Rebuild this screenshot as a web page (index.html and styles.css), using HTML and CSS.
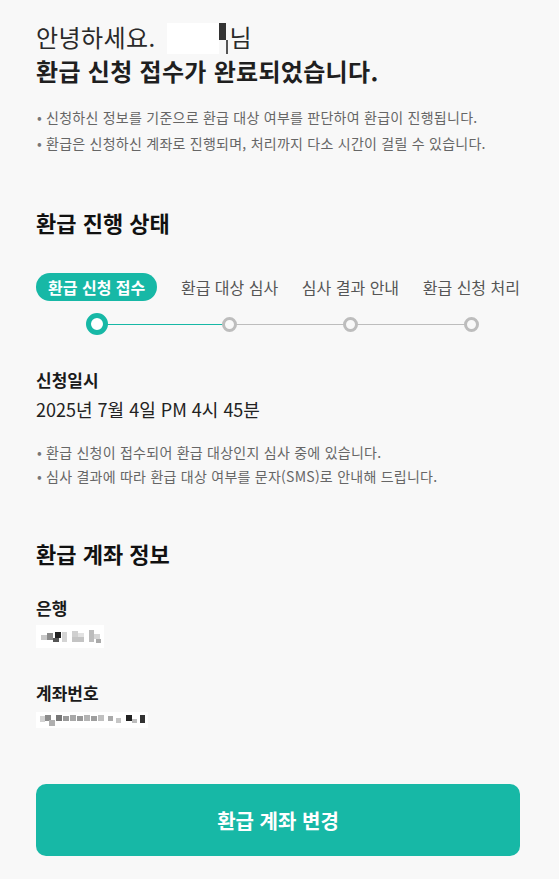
FILE: index.html
```html
<!DOCTYPE html>
<html lang="ko">
<head>
    <meta charset="UTF-8">
    <meta name="viewport" content="width=device-width, initial-scale=1.0">
    <title>환급 신청 완료</title>
    <link rel="stylesheet" href="styles.css">
</head>
<body>
    <main class="page">
        <section class="intro">
            <p class="greeting">안녕하세요.<span class="name-mask"><span class="mask-box"></span><span class="mask-bar"></span><span class="mask-stem"></span></span>님</p>
            <h1 class="title">환급 신청 접수가 완료되었습니다.</h1>
            <ul class="notes">
                <li>신청하신 정보를 기준으로 환급 대상 여부를 판단하여 환급이 진행됩니다.</li>
                <li>환급은 신청하신 계좌로 진행되며, 처리까지 다소 시간이 걸릴 수 있습니다.</li>
            </ul>
        </section>

        <section class="status">
            <h2 class="section-title">환급 진행 상태</h2>
            <div class="steps">
                <div class="track"></div>
                <div class="step active">
                    <span class="step-label">환급 신청 접수</span>
                    <span class="dot"></span>
                </div>
                <div class="step">
                    <span class="step-label">환급 대상 심사</span>
                    <span class="dot"></span>
                </div>
                <div class="step">
                    <span class="step-label">심사 결과 안내</span>
                    <span class="dot"></span>
                </div>
                <div class="step">
                    <span class="step-label">환급 신청 처리</span>
                    <span class="dot"></span>
                </div>
            </div>

            <dl class="info">
                <dt>신청일시</dt>
                <dd class="date">2025년 7월 4일 PM 4시 45분</dd>
            </dl>
            <ul class="notes compact">
                <li>환급 신청이 접수되어 환급 대상인지 심사 중에 있습니다.</li>
                <li>심사 결과에 따라 환급 대상 여부를 문자(SMS)로 안내해 드립니다.</li>
            </ul>
        </section>

        <section class="account">
            <h2 class="section-title">환급 계좌 정보</h2>
            <dl class="info">
                <dt>은행</dt>
                <dd>
                    <!-- masked bank name -->
                    <svg class="masked" width="70" height="28" viewBox="0 0 70 28">
                        <rect x="0" y="5" width="68" height="23" fill="#fff"/>
                        <rect x="5" y="15" width="6" height="5" fill="#c8c8c8"/>
                        <rect x="11" y="13" width="6" height="7" fill="#8a8a8a"/>
                        <rect x="19" y="12" width="6" height="6" fill="#222"/>
                        <rect x="17" y="18" width="6" height="4" fill="#555"/>
                        <rect x="26" y="12" width="5" height="10" fill="#d4d4d4"/>
                        <rect x="36" y="11" width="6" height="6" fill="#d0d0d0"/>
                        <rect x="36" y="17" width="12" height="5" fill="#c4c4c4"/>
                        <rect x="42" y="13" width="6" height="4" fill="#e2e2e2"/>
                        <rect x="53" y="10" width="5" height="12" fill="#bcbcbc"/>
                        <rect x="58" y="14" width="6" height="5" fill="#d6d6d6"/>
                        <rect x="60" y="19" width="5" height="4" fill="#aaa"/>
                    </svg>
                </dd>
                <dt>계좌번호</dt>
                <dd>
                    <!-- masked account number -->
                    <svg class="masked" width="112" height="24" viewBox="0 0 112 24">
                        <rect x="0" y="7" width="112" height="16" fill="#fff"/>
                        <rect x="4" y="11" width="5" height="6" fill="#d2d2d2"/>
                        <rect x="9" y="10" width="6" height="6" fill="#8c8c8c"/>
                        <rect x="13" y="15" width="6" height="6" fill="#b0b0b0"/>
                        <rect x="20" y="10" width="6" height="6" fill="#777"/>
                        <rect x="27" y="11" width="6" height="5" fill="#9a9a9a"/>
                        <rect x="34" y="10" width="6" height="6" fill="#a8a8a8"/>
                        <rect x="41" y="11" width="6" height="5" fill="#999"/>
                        <rect x="48" y="10" width="6" height="6" fill="#b4b4b4"/>
                        <rect x="55" y="11" width="6" height="5" fill="#9e9e9e"/>
                        <rect x="62" y="10" width="6" height="6" fill="#c0c0c0"/>
                        <rect x="72" y="11" width="5" height="5" fill="#aaa"/>
                        <rect x="80" y="13" width="5" height="5" fill="#c6c6c6"/>
                        <rect x="90" y="10" width="6" height="6" fill="#222"/>
                        <rect x="96" y="14" width="5" height="4" fill="#bdbdbd"/>
                        <rect x="104" y="10" width="5" height="8" fill="#333"/>
                    </svg>
                </dd>
            </dl>
        </section>

        <button class="primary-btn" type="button">환급 계좌 변경</button>
    </main>
</body>
</html>
```

FILE: styles.css
```css
:root {
    --primary: #17b8a6;
    --text: #222;
    --sub: #666;
    --line: #bdbdbd;
    --bg: #f8f8f8;
}

* {
    margin: 0;
    padding: 0;
    box-sizing: border-box;
}

body {
    background: var(--bg);
    color: var(--text);
    font-family: "Noto Sans CJK KR", "Noto Sans", sans-serif;
}

.page {
    padding: 20px 39px 22px 36px;
}

/* greeting */
.greeting {
    font-size: 24px;
    line-height: 34px;
    color: #2a2a2a;
    letter-spacing: 0.4px;
}

.name-mask {
    display: inline-flex;
    vertical-align: -7px;
    height: 31px;
    margin: 0 2px 0 11px;
}

.mask-box {
    width: 52px;
    height: 31px;
    background: #fff;
}

.mask-bar {
    width: 7px;
    height: 17px;
    background: #333;
}

.mask-stem {
    width: 2px;
    height: 31px;
    background: linear-gradient(to bottom, transparent 17px, #555 17px);
}

.title {
    font-size: 24px;
    line-height: 34px;
    font-weight: 700;
    color: #1f1f1f;
    letter-spacing: 0.3px;
}

.notes {
    list-style: none;
    margin-top: 16px;
}

.notes li {
    position: relative;
    padding-left: 10px;
    font-size: 14px;
    line-height: 26px;
    color: var(--sub);
    letter-spacing: 0.25px;
}

.notes.compact li {
    line-height: 24px;
}

.notes li::before {
    content: "•";
    position: absolute;
    left: 1px;
    color: #777;
}

.section-title {
    font-size: 22px;
    line-height: 30px;
    font-weight: 700;
    color: #111;
}

/* progress */
.status {
    margin-top: 51px;
}

.steps {
    position: relative;
    display: flex;
    justify-content: space-between;
    margin-top: 36px;
}

.track {
    position: absolute;
    left: 60px;
    right: 49px;
    top: 51px;
    height: 1px;
    background: linear-gradient(to right, var(--primary) 131px, var(--line) 131px);
}

.step {
    display: flex;
    flex-direction: column;
    align-items: center;
    gap: 16px;
}

.step-label {
    font-size: 16px;
    line-height: 28px;
    color: #555;
    white-space: nowrap;
}

.step.active .step-label {
    background: var(--primary);
    color: #fff;
    font-weight: 700;
    padding: 0 12px;
    border-radius: 14px;
}

.dot {
    position: relative;
    width: 15px;
    height: 15px;
    border: 3px solid var(--line);
    border-radius: 50%;
    background: var(--bg);
}

.step.active .dot {
    width: 22px;
    height: 22px;
    margin-top: -4px;
    border: 5px solid var(--primary);
    background: #fff;
}

/* details */
.info {
    margin-top: 33px;
}

.info dt {
    font-size: 17px;
    line-height: 24px;
    font-weight: 700;
    color: #1a1a1a;
}

.info dd {
    margin-top: 4px;
    font-size: 18px;
    line-height: 26px;
}

.info dd + dt {
    margin-top: 33px;
}

.masked {
    display: block;
}

.status .notes {
    margin-top: 18px;
}

.account {
    margin-top: 50px;
}

.account .info {
    margin-top: 28px;
}

.account .info dd {
    margin-top: 0;
}

.primary-btn {
    display: block;
    width: 100%;
    height: 72px;
    margin-top: 55px;
    border: none;
    border-radius: 10px;
    background: var(--primary);
    color: #fff;
    font-family: inherit;
    font-size: 20px;
    font-weight: 700;
    cursor: pointer;
}
```
